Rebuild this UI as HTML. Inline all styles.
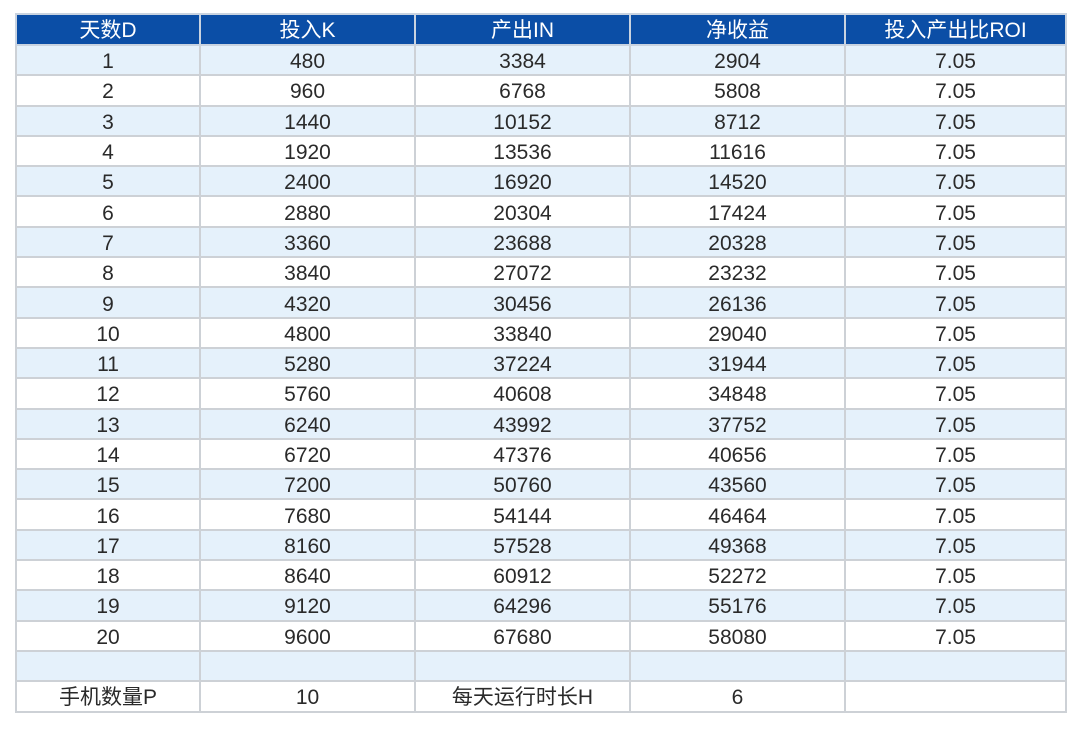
<!DOCTYPE html>
<html><head><meta charset="utf-8"><style>
html,body{margin:0;padding:0;background:#fff;width:1080px;height:729px;overflow:hidden}
table{position:absolute;left:15px;top:13px;border-collapse:collapse;table-layout:fixed;font-family:"Liberation Sans","Noto Sans CJK SC",sans-serif;font-size:21px;color:#2a2a2a}
td{border:2px solid #cdd1d6;text-align:center;padding:4px 0 0 0;height:24.3px;line-height:24px;overflow:hidden}
tr.h td{background:#0b4ea6;color:#fff;height:26px;padding-top:3px;border-color:#c9d3e0}
tr.s td{background:#e5f1fb}
</style></head><body>
<table>
<colgroup><col style="width:184px"><col style="width:215px"><col style="width:215px"><col style="width:215px"><col style="width:221px"></colgroup>
<tr class="h"><td>天数D</td><td>投入K</td><td>产出IN</td><td>净收益</td><td>投入产出比ROI</td></tr>
<tr class="s"><td>1</td><td>480</td><td>3384</td><td>2904</td><td>7.05</td></tr>
<tr><td>2</td><td>960</td><td>6768</td><td>5808</td><td>7.05</td></tr>
<tr class="s"><td>3</td><td>1440</td><td>10152</td><td>8712</td><td>7.05</td></tr>
<tr><td>4</td><td>1920</td><td>13536</td><td>11616</td><td>7.05</td></tr>
<tr class="s"><td>5</td><td>2400</td><td>16920</td><td>14520</td><td>7.05</td></tr>
<tr><td>6</td><td>2880</td><td>20304</td><td>17424</td><td>7.05</td></tr>
<tr class="s"><td>7</td><td>3360</td><td>23688</td><td>20328</td><td>7.05</td></tr>
<tr><td>8</td><td>3840</td><td>27072</td><td>23232</td><td>7.05</td></tr>
<tr class="s"><td>9</td><td>4320</td><td>30456</td><td>26136</td><td>7.05</td></tr>
<tr><td>10</td><td>4800</td><td>33840</td><td>29040</td><td>7.05</td></tr>
<tr class="s"><td>11</td><td>5280</td><td>37224</td><td>31944</td><td>7.05</td></tr>
<tr><td>12</td><td>5760</td><td>40608</td><td>34848</td><td>7.05</td></tr>
<tr class="s"><td>13</td><td>6240</td><td>43992</td><td>37752</td><td>7.05</td></tr>
<tr><td>14</td><td>6720</td><td>47376</td><td>40656</td><td>7.05</td></tr>
<tr class="s"><td>15</td><td>7200</td><td>50760</td><td>43560</td><td>7.05</td></tr>
<tr><td>16</td><td>7680</td><td>54144</td><td>46464</td><td>7.05</td></tr>
<tr class="s"><td>17</td><td>8160</td><td>57528</td><td>49368</td><td>7.05</td></tr>
<tr><td>18</td><td>8640</td><td>60912</td><td>52272</td><td>7.05</td></tr>
<tr class="s"><td>19</td><td>9120</td><td>64296</td><td>55176</td><td>7.05</td></tr>
<tr><td>20</td><td>9600</td><td>67680</td><td>58080</td><td>7.05</td></tr>
<tr class="s"><td></td><td></td><td></td><td></td><td></td></tr>
<tr><td>手机数量P</td><td>10</td><td>每天运行时长H</td><td>6</td><td></td></tr>
</table>
</body></html>
